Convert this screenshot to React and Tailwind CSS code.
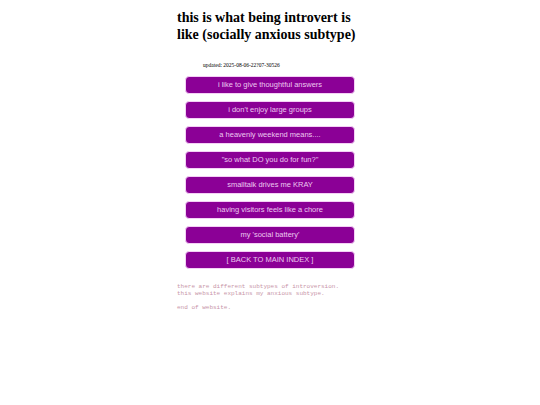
export default function App() {
  const items = [
    "i like to give thoughtful answers",
    "i don't enjoy large groups",
    "a heavenly weekend means....",
    "\"so what DO you do for fun?\"",
    "smalltalk drives me KRAY",
    "having visitors feels like a chore",
    "my 'social battery'",
    "[ BACK TO MAIN INDEX ]",
  ];
  return (
    <div className="min-h-[405px] w-[540px] bg-white">
      <div className="mx-auto w-[186px] pt-[9px]">
        <h1 className="text-[14px] font-bold leading-[17px] text-black" style={{ fontFamily: '"Liberation Serif", serif' }}>
          this is what being introvert is like (socially anxious subtype)
        </h1>
        <p className="mt-[18px] pl-[26px] text-[5.5px] leading-[8px] text-black" style={{ fontFamily: '"Liberation Serif", serif' }}>
          updated: 2025-08-06-22?07-30526
        </p>
        <div className="mt-[7px] flex flex-col items-center gap-[7px]">
          {items.map((t) => (
            <div
              key={t}
              className="flex h-[18px] w-[170px] items-center justify-center rounded-[4px] border border-[#f4d0f6] bg-[#8b0096] text-[7.5px] text-[#ecc8f0]"
              style={{ fontFamily: '"Liberation Sans", Arial, sans-serif' }}
            >
              {t}
            </div>
          ))}
        </div>
        <div className="mt-[14px] text-[6px] leading-[7px] text-[#c895a8]" style={{ fontFamily: '"Liberation Mono", monospace' }}>
          <p>there are different subtypes of introversion.</p>
          <p>this website explains my anxious subtype.</p>
          <p className="mt-[7px]">end of website.</p>
        </div>
      </div>
    </div>
  );
}
